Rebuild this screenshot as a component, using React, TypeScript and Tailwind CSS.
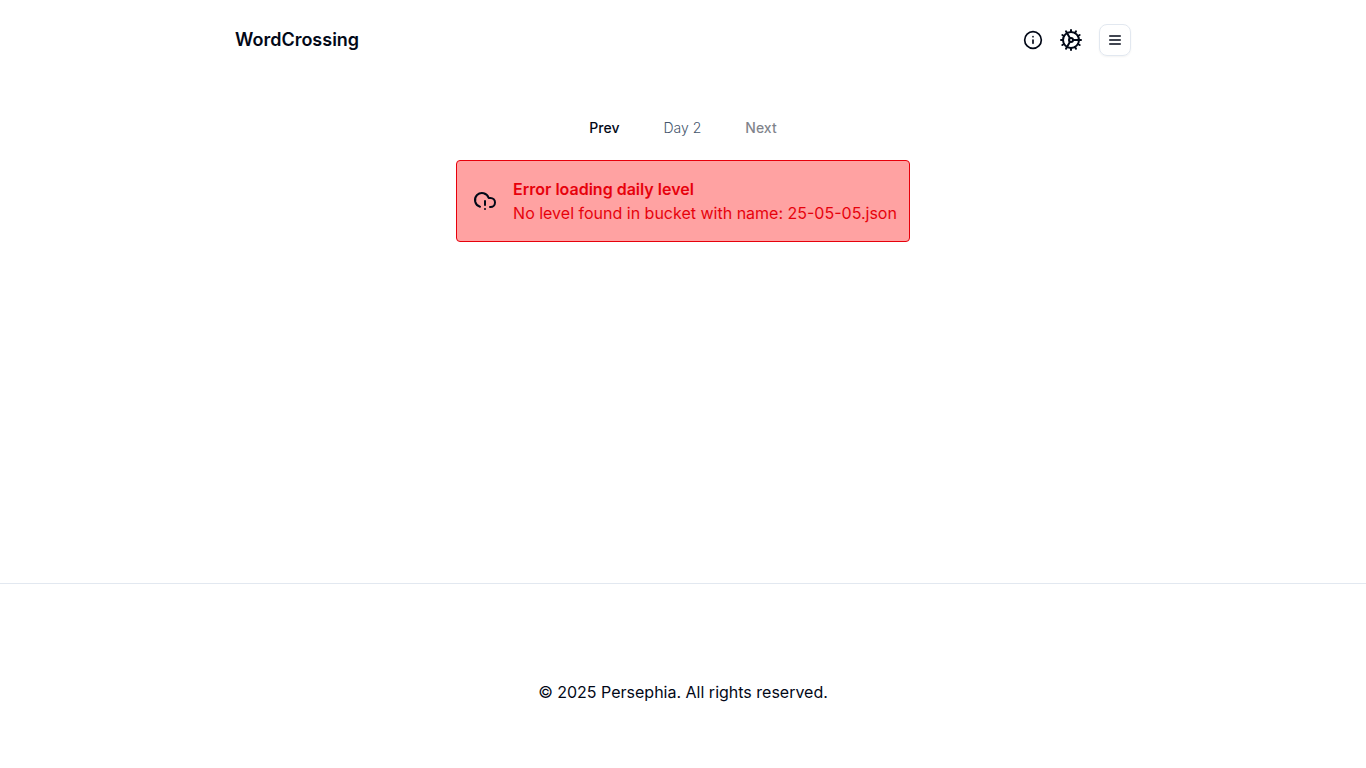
import React from 'react';
import { CloudAlert, Cog, Info } from 'lucide-react';

const MenuIcon: React.FC<{ className?: string }> = ({ className }) => (
  <svg
    viewBox="0 0 24 24"
    fill="none"
    stroke="currentColor"
    strokeWidth={2}
    strokeLinecap="round"
    strokeLinejoin="round"
    className={className}
    aria-hidden="true"
  >
    <path d="M4 12h16" />
    <path d="M4 6h16" />
    <path d="M4 18h16" />
  </svg>
);

const Header: React.FC = () => (
  <header className="w-full max-w-4xl mx-auto flex items-center justify-between py-6">
    <a href="#" className="text-lg font-semibold leading-8">
      WordCrossing
    </a>
    <div className="flex items-center gap-4">
      <button aria-label="How to play">
        <Info className="w-5 h-5" />
      </button>
      <button aria-label="Settings">
        <Cog className="w-6 h-6" />
      </button>
      <button
        aria-label="Menu"
        className="flex items-center justify-center w-8 h-8 rounded-lg border border-slate-200 shadow-xs"
      >
        <MenuIcon className="w-4 h-4" />
      </button>
    </div>
  </header>
);

const DayNav: React.FC = () => (
  <nav className="flex items-center justify-center gap-3 text-sm">
    <button className="h-8 px-4 font-medium">Prev</button>
    <span className="px-4 font-light text-slate-600">Day 2</span>
    <button className="h-8 px-4 font-medium opacity-50" disabled>
      Next
    </button>
  </nav>
);

interface ErrorAlertProps {
  title: string;
  message: string;
}

const ErrorAlert: React.FC<ErrorAlertProps> = ({ title, message }) => (
  <div
    role="alert"
    className="flex items-center gap-4 p-4 pr-3 rounded-sm border border-red-600 bg-red-300"
  >
    <CloudAlert className="w-6 h-6" />
    <div className="text-red-600">
      <p className="font-semibold">{title}</p>
      <p>{message}</p>
    </div>
  </div>
);

const App: React.FC = () => (
  <div className="min-h-screen flex flex-col bg-white text-[#020817] font-['Inter',sans-serif]">
    <Header />

    <main className="grow flex flex-col items-center gap-4 pt-8">
      <DayNav />
      <ErrorAlert
        title="Error loading daily level"
        message="No level found in bucket with name: 25-05-05.json"
      />
    </main>

    <footer className="border-t border-slate-200 pt-24 pb-16 text-center">
      <p>© 2025 Persephia. All rights reserved.</p>
    </footer>
  </div>
);

export default App;
